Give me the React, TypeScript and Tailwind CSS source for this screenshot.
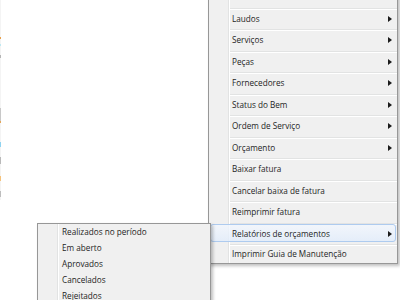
const mainItems: { label: string; sub?: boolean; active?: boolean }[] = [
  { label: "" },
  { label: "Laudos", sub: true },
  { label: "Serviços", sub: true },
  { label: "Peças", sub: true },
  { label: "Fornecedores", sub: true },
  { label: "Status do Bem", sub: true },
  { label: "Ordem de Serviço", sub: true },
  { label: "Orçamento", sub: true },
  { label: "Baixar fatura" },
  { label: "Cancelar baixa de fatura" },
  { label: "Reimprimir fatura" },
  { label: "Relatórios de orçamentos", sub: true, active: true },
  { label: "Imprimir Guia de Manutenção" },
];

const reportItems = [
  "Realizados no período",
  "Em aberto",
  "Aprovados",
  "Cancelados",
  "Rejeitados",
];

function Arrow() {
  return (
    <span className="mr-[5px] h-0 w-0 border-y-[3px] border-l-[4px] border-y-transparent border-l-[#1b1b1b]" />
  );
}

function Gutter() {
  return (
    <>
      <div className="w-[19px] shrink-0" />
      <div className="w-px shrink-0 bg-[#e2e3e3]" />
      <div className="w-px shrink-0 bg-white" />
    </>
  );
}

export default function App() {
  return (
    <div
      className="relative h-[300px] w-[400px] overflow-hidden bg-white text-[8.2px] text-[#1e1e1e]"
      style={{ fontFamily: '"Open Sans", "Noto Sans", sans-serif' }}
    >
      {/* edge of the window behind */}
      <div className="absolute left-0 top-0 flex h-[200px] w-px flex-col bg-[#f4f4f4]">
        <div className="mt-[37px] h-[2px] bg-[#e8a04a]" />
        <div className="mt-[5px] h-[2px] bg-[#bfe9f2]" />
        <div className="mt-[9px] h-[3px] bg-[#b5b5b5]" />
        <div className="mt-[50px] h-[13px] bg-[#c8c8c8]" />
        <div className="h-[2px] bg-[#e3a75a]" />
        <div className="mt-[19px] h-[5px] bg-[#8fd3f0]" />
        <div className="mt-[10px] h-[7px] bg-[#b9b9b9]" />
        <div className="mt-[12px] h-[5px] bg-[#f5c27a]" />
        <div className="mt-[10px] h-[6px] bg-[#bdbdbd]" />
      </div>

      {/* main context menu */}
      <div className="absolute left-[208px] top-[-15px] w-[190px] border border-[#979797] bg-[#f0f0f0] shadow-[2px_2px_3px_rgba(0,0,0,0.25)]">
        {mainItems.map((item, i) => (
          <div
            key={i}
            className={`relative flex ${i === mainItems.length - 1 ? "h-[18.5px]" : "h-[21.5px]"}`}
          >
            <Gutter />
            <div
              className={`flex flex-1 items-center justify-between pl-[2px] ${
                i === 0 ? "" : "border-t border-[#e2e3e3] shadow-[inset_0_1px_0_#ffffff]"
              }`}
            >
              <span className="relative z-10">{item.label}</span>
              {item.sub && (
                <span className="relative z-10 flex">
                  <Arrow />
                </span>
              )}
            </div>
            {item.active && (
              <div className="absolute left-[1px] right-[1px] top-[1px] h-[18px] rounded-[3px] border border-[#aecbef] bg-gradient-to-b from-[#f2f7fe]/80 to-[#e2edfb]/80" />
            )}
          </div>
        ))}
      </div>

      {/* submenu */}
      <div className="absolute left-[37px] top-[223px] z-20 w-[174px] border border-[#979797] bg-[#f0f0f0] shadow-[2px_2px_3px_rgba(0,0,0,0.25)]">
        {reportItems.map((label) => (
          <div key={label} className="flex h-[16px]">
            <Gutter />
            <div className="flex flex-1 items-center pl-[3px]">{label}</div>
          </div>
        ))}
      </div>
    </div>
  );
}
